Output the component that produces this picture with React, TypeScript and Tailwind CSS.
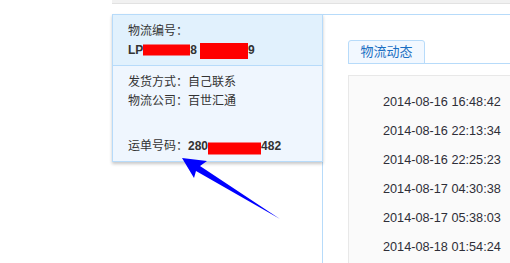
const dates = [
  "2014-08-16 16:48:42",
  "2014-08-16 22:13:34",
  "2014-08-16 22:25:23",
  "2014-08-17 04:30:38",
  "2014-08-17 05:38:03",
  "2014-08-18 01:54:24",
];

export default function App() {
  return (
    <div className="relative w-[510px] h-[263px] overflow-hidden bg-white font-['Liberation_Sans','Noto_Sans_CJK_SC',sans-serif] text-[12px] text-[#333]">
      <div className="ml-[112px] h-[4px] bg-[#f1f1f1] border-b border-[#e2e2e2]" />

      <div className="flex mt-[10px] pl-[112px]">
        {/* order info */}
        <div className="w-[211px] self-start border border-[#b7dbfa] shadow-[0_2px_3px_rgba(0,0,0,0.22)] relative z-10">
          <div className="bg-[#e1f1fd] px-[15px] pt-[7px] pb-[5px] leading-[19px] border-b border-[#b7dbfa]">
            <div>物流编号：</div>
            <div className="font-bold flex items-center">
              LP
              <span className="inline-block w-[47px] h-[11px] bg-[#ff0000] translate-y-[-0.5px]" />
              8
              <span className="inline-block ml-[3px] w-[48px] h-[16px] bg-[#ff0000]" />
              9
            </div>
          </div>
          <div className="bg-[#eff6fe] px-[15px] pt-[7px] pb-[5px] leading-[19px]">
            <div>发货方式：自己联系</div>
            <div>物流公司：百世汇通</div>
            <div className="mt-[26px] flex items-center">
              运单号码：<span className="font-bold">280</span>
              <span className="inline-block w-[53px] h-[12px] bg-[#ff0000] translate-y-[1.5px]" />
              <span className="font-bold">482</span>
            </div>
          </div>
        </div>

        {/* tracking */}
        <div className="flex-1 -ml-px h-[249px] border-t border-l border-[#b7dbfa] pl-[25px] pt-[25px]">
          <div className="flex border-b border-[#b7dbfa]">
            <div className="w-[77px] h-[24px] -mb-px bg-[#f2f8ff] border border-[#b7dbfa] rounded-t-[3px] flex items-center justify-center text-[13px] text-[#1a6ec2]">
              物流动态
            </div>
          </div>
          <div className="mt-[11px] h-[200px] bg-[#fafafa] border-t border-l border-[#e8e8e8] pl-[34px] pt-[12px] text-[12.7px] text-[#2e2e38] leading-[29px]">
            {dates.map((d) => (
              <div key={d}>{d}</div>
            ))}
          </div>
        </div>
      </div>

      <svg className="absolute left-0 top-0 z-30 pointer-events-none" width="510" height="263">
        <polygon
          points="182,158 207,161 200,166 280,219 196,171 194,178"
          fill="#0000ff"
        />
      </svg>
    </div>
  );
}
